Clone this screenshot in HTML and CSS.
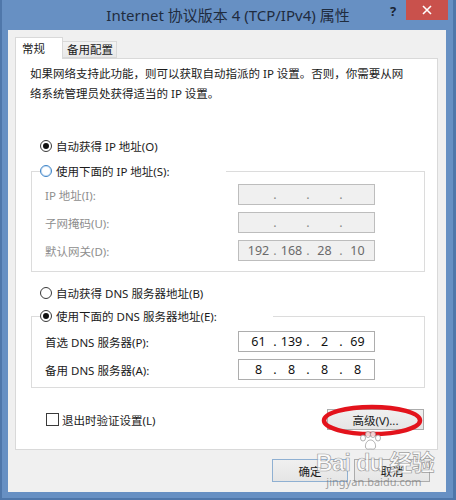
FILE: index.html
```html
<!DOCTYPE html>
<html lang="zh-CN">
<head>
<meta charset="utf-8">
<title>Internet 协议版本 4 (TCP/IPv4) 属性</title>
<link rel="stylesheet" href="styles.css">
</head>
<body>
<div class="window">
  <div class="titlebar">
    <div></div>
    <div class="title">Internet 协议版本 4 (TCP/IPv4) 属性</div>
    <div class="controls">
      <span class="help">?</span>
      <span class="close"><svg width="10" height="10" viewBox="0 0 10 10"><path d="M1 1L9 9M9 1L1 9" stroke="#fff" stroke-width="1.6"/></svg></span>
    </div>
  </div>
  <div class="client">
    <div class="tabs">
      <div class="tab active">常规</div>
      <div class="tab">备用配置</div>
    </div>
    <div class="panel">
      <p class="desc">如果网络支持此功能，则可以获取自动指派的 IP 设置。否则，你需要从网络系统管理员处获得适当的 IP 设置。</p>

      <div class="radio-row first"><span class="radio checked"></span><span>自动获得 IP 地址(O)</span></div>

      <fieldset class="group g1">
        <legend class="radio-row legend1"><span class="radio focus"></span><span>使用下面的 IP 地址(S):</span></legend>
        <div class="fields">
          <span class="label disabled">IP 地址(I):</span>
          <div class="ip off"><span></span><i>.</i><span></span><i>.</i><span></span><i>.</i><span></span></div>
          <span class="label disabled">子网掩码(U):</span>
          <div class="ip off"><span></span><i>.</i><span></span><i>.</i><span></span><i>.</i><span></span></div>
          <span class="label disabled">默认网关(D):</span>
          <div class="ip off"><span>192</span><i>.</i><span>168</span><i>.</i><span>28</span><i>.</i><span>10</span></div>
        </div>
      </fieldset>

      <div class="radio-row dns-auto"><span class="radio"></span><span>自动获得 DNS 服务器地址(B)</span></div>

      <fieldset class="group g2">
        <legend class="radio-row legend2"><span class="radio checked"></span><span>使用下面的 DNS 服务器地址(E):</span></legend>
        <div class="fields f2">
          <span class="label">首选 DNS 服务器(P):</span>
          <div class="ip"><span>61</span><i>.</i><span>139</span><i>.</i><span>2</span><i>.</i><span>69</span></div>
          <span class="label">备用 DNS 服务器(A):</span>
          <div class="ip"><span>8</span><i>.</i><span>8</span><i>.</i><span>8</span><i>.</i><span>8</span></div>
        </div>
      </fieldset>

      <div class="bottom-row">
        <label class="check-row"><span class="checkbox"></span><span>退出时验证设置(L)</span></label>
        <button class="btn adv">高级(V)...</button>
      </div>
    </div>
    <div class="actions">
      <button class="btn ok">确定</button>
      <button class="btn">取消</button>
    </div>
  </div>

  <svg class="mark" width="104" height="34" viewBox="0 0 104 34"><ellipse cx="52" cy="16.5" rx="48" ry="13.5" fill="none" stroke="#e3131c" stroke-width="4.5"/></svg>
  <svg class="paw" width="24" height="20" viewBox="0 0 24 20">
    <g fill="rgba(255,255,255,0.8)" stroke="rgba(150,150,150,0.75)" stroke-width="1">
      <ellipse cx="5" cy="7" rx="2.5" ry="3"/>
      <ellipse cx="10" cy="3.5" rx="2.5" ry="3"/>
      <ellipse cx="15" cy="3.5" rx="2.5" ry="3"/>
      <ellipse cx="20" cy="7" rx="2.5" ry="3"/>
      <path d="M12.5 9C9 9 7 13 7.5 16C8 19 11 18 12.5 18C14 18 17 19 17.5 16C18 13 16 9 12.5 9Z"/>
    </g>
  </svg>
  <div class="watermark">
    <div class="wm-main">Bai du 经验</div>
    <div class="wm-url">jingyan.baidu.com</div>
  </div>
</div>
</body>
</html>
```

FILE: styles.css
```css
* { box-sizing: border-box; }

body {
  margin: 0;
  width: 456px;
  height: 500px;
  overflow: hidden;
  background: #6790c3;
  font-family: "Noto Sans", "Noto Sans CJK SC", sans-serif;
  font-size: 11.5px;
  color: #1b1b1b;
}

.window {
  position: relative;
  height: 500px;
  display: flex;
  flex-direction: column;
  box-shadow: inset 2px 0 0 #4f77aa, inset -3px 0 0 #4f77aa, inset 0 -2px 0 #4f77aa;
}

.titlebar {
  height: 30px;
  display: grid;
  grid-template-columns: 1fr auto 1fr;
  align-items: start;
}

.title {
  font-size: 15px;
  line-height: 30px;
  color: #1f2c3f;
}

.controls {
  justify-self: end;
  display: flex;
  align-items: flex-start;
  margin-right: 8px;
}

.help {
  width: 26px;
  text-align: center;
  font-weight: bold;
  font-size: 13px;
  line-height: 22px;
  color: #1a2433;
}

.close {
  width: 42px;
  height: 20px;
  background: #c9514c;
  display: flex;
  align-items: center;
  justify-content: center;
}

.client {
  flex: 1;
  margin: 0 10px 8px 8px;
  background: #f0f0f0;
  padding: 8px 8px 0 7px;
  display: flex;
  flex-direction: column;
}

.tabs {
  display: flex;
  align-items: flex-end;
  height: 21px;
  margin-bottom: -1px;
  position: relative;
  z-index: 1;
}

.tab {
  height: 17px;
  width: 54px;
  padding-left: 4px;
  line-height: 16px;
  border: 1px solid #d9d9d9;
  border-left: none;
  background: linear-gradient(#f3f3f3, #e8e8e8);
  margin-bottom: 1px;
}

.tab.active {
  height: 22px;
  width: 48px;
  padding-left: 6px;
  line-height: 22px;
  border: 1px solid #d9d9d9;
  border-bottom: none;
  background: #fff;
  margin-bottom: 0;
}

.panel {
  height: 392px;
  background: #fff;
  border: 1px solid #d9d9d9;
  display: flex;
  flex-direction: column;
}

.desc {
  margin: 5px 0 0 14px;
  width: 378px;
  line-height: 20px;
}

.radio-row {
  display: flex;
  align-items: center;
  gap: 4px;
  height: 20px;
}

.radio {
  width: 12px;
  height: 12px;
  border-radius: 50%;
  border: 1px solid #3a3a3a;
  background: #fff;
  display: flex;
  align-items: center;
  justify-content: center;
  flex: none;
}

.radio.checked::after {
  content: "";
  width: 6px;
  height: 6px;
  border-radius: 50%;
  background: #111;
}

.radio.focus {
  border-color: #3d83c7;
  box-shadow: inset 0 0 0 1px #c9e0f5;
}

.first {
  margin: 32px 0 0 24px;
}

.group {
  margin: 0 12px 0 15px;
  padding: 0;
  border: 1px solid #dcdcdc;
  min-width: 0;
}

.g1 { margin-top: 5px; }
.g2 { margin-top: 3px; }

.group legend {
  padding: 0 56px 0 0;
  margin-left: 8px;
}

.legend2 { padding-right: 52px; }

.fields {
  display: grid;
  grid-template-columns: 1fr 137px;
  row-gap: 7px;
  align-items: center;
  padding: 3px 49px 10px 13px;
}

.f2 { padding-top: 5px; padding-bottom: 7px; }

.label.disabled { color: #8e8e8e; }

.ip {
  height: 21px;
  border: 1px solid #adadad;
  background: #fff;
  display: flex;
  align-items: center;
  padding-left: 5px;
  font-size: 12.5px;
  color: #111;
}

.ip span {
  width: 29px;
  text-align: center;
}

.ip i {
  width: 4px;
  font-style: normal;
  text-align: center;
}

.ip.off {
  background: #f0f0f0;
  border-color: #bdbdbd;
  color: #6a6a6a;
}

.ip.off i { color: #8a8a8a; }

.dns-auto {
  margin: 11px 0 0 24px;
}

.bottom-row {
  display: flex;
  align-items: center;
  justify-content: space-between;
  margin: 21px 13px 0 30px;
}

.check-row {
  display: flex;
  align-items: center;
  gap: 3px;
}

.checkbox {
  width: 13px;
  height: 13px;
  border: 1px solid #3a3a3a;
  background: #fff;
}

.btn {
  font: inherit;
  color: #1b1b1b;
  height: 23px;
  width: 76px;
  border: 1px solid #acacac;
  background: linear-gradient(#f0f0f0, #e5e5e5);
  padding: 0;
}

.adv {
  width: 97px;
  height: 21px;
}

.actions {
  display: flex;
  justify-content: flex-end;
  gap: 6px;
  margin: 9px 8px 0 0;
}

.ok {
  border-color: #8fb0d2;
}

.mark {
  position: absolute;
  left: 320px;
  top: 404px;
}

.paw {
  position: absolute;
  left: 358px;
  top: 431px;
}

.watermark {
  position: absolute;
  left: 316px;
  top: 451px;
  width: 116px;
  text-align: center;
  pointer-events: none;
}

.wm-main {
  font-family: "Liberation Sans", "Noto Sans CJK SC", sans-serif;
  font-size: 23px;
  font-weight: bold;
  line-height: 25px;
  white-space: nowrap;
  color: rgba(255, 255, 255, 0.78);
  -webkit-text-stroke: 0.7px rgba(125, 125, 125, 0.75);
  letter-spacing: -0.5px;
}

.wm-url {
  font-size: 11px;
  line-height: 12px;
  color: rgba(120, 120, 120, 0.7);
}
```
